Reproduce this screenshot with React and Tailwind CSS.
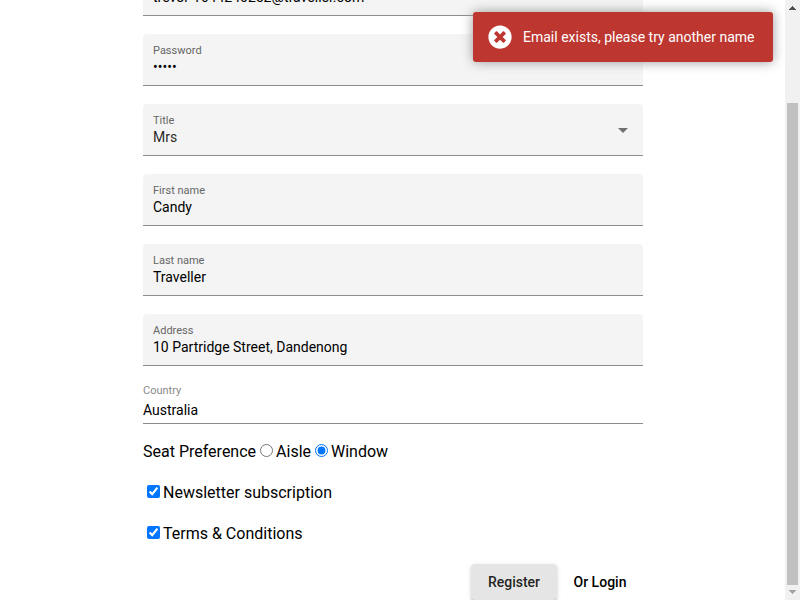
import { FaTimesCircle } from "react-icons/fa";

const textFields = [
  { id: "first-name", label: "First name", value: "Candy" },
  { id: "last-name", label: "Last name", value: "Traveller" },
  { id: "address", label: "Address", value: "10 Partridge Street, Dandenong" },
];

function FilledField({ id, label, children }) {
  return (
    <div className="relative flex h-[52px] flex-col rounded-t border-b border-[#8c8c8c] bg-[#f4f4f4] px-[10px] pt-[11px]">
      <label htmlFor={id} className="text-[11px] leading-3 text-[#666666]">
        {label}
      </label>
      {children}
    </div>
  );
}

function TextField({ id, label, value, type = "text" }) {
  return (
    <FilledField id={id} label={label}>
      <input
        id={id}
        type={type}
        defaultValue={value}
        className="h-5 w-full bg-transparent text-sm text-black outline-none"
      />
    </FilledField>
  );
}

function CheckRow({ id, label }) {
  return (
    <div className="mt-[17px] flex h-6 items-center gap-[3px] pl-1">
      <input id={id} type="checkbox" defaultChecked className="mb-[3px] h-[13px] w-[13px]" />
      <label htmlFor={id}>{label}</label>
    </div>
  );
}

function Toast() {
  return (
    <div
      role="alert"
      className="absolute top-3 right-3 flex h-[50px] w-[300px] items-center gap-[11px] rounded-[3px] bg-[#bd362f] pl-[15px] text-sm text-white shadow-[0_0_12px_#999999]"
    >
      <FaTimesCircle className="h-6 w-6" />
      <span>Email exists, please try another name</span>
    </div>
  );
}

function ScrollTrack() {
  return (
    <div aria-hidden="true" className="flex w-[15px] shrink-0 flex-col items-center bg-[#f1f1f1]">
      <svg viewBox="0 0 15 15" className="h-[15px] w-[15px] shrink-0" shapeRendering="crispEdges">
        <path d="M4 10h7v-1h-1v-1h-1v-1h-1v-1h-1v1h-1v1h-1v1h-1z" fill="#505050" />
      </svg>
      <div className="flex w-full flex-1 flex-col items-center">
        <div className="h-[88px] shrink-0" />
        <div className="w-[11px] flex-1 bg-[#c1c1c1]" />
      </div>
      <svg viewBox="0 0 15 15" className="h-[15px] w-[15px] shrink-0" shapeRendering="crispEdges">
        <path d="M4 5h7v1h-1v1h-1v1h-1v1h-1v-1h-1v-1h-1v-1h-1z" fill="#a3a3a3" />
      </svg>
    </div>
  );
}

export default function App() {
  return (
    <div className="flex h-screen bg-white font-[Roboto,sans-serif] text-black">
      <main className="relative min-w-0 flex-1 overflow-hidden pl-px">
        <form className="mx-auto -mt-9 w-full max-w-[500px]" onSubmit={(e) => e.preventDefault()}>
          <div className="flex flex-col gap-[18px]">
            <TextField id="email" label="Email" value="trevor-1644240252@traveller.com" type="email" />
            <TextField id="password" label="Password" value="12345" type="password" />
            <FilledField id="title" label="Title">
              <select
                id="title"
                defaultValue="Mrs"
                className="h-5 w-full appearance-none bg-transparent text-sm text-black/87 outline-none"
              >
                <option>Mr</option>
                <option>Mrs</option>
                <option>Ms</option>
              </select>
              <svg viewBox="0 0 10 5" className="pointer-events-none absolute top-6 right-[15px] h-[5px] w-[10px]">
                <path d="M0 0h10L5 5z" fill="#707070" />
              </svg>
            </FilledField>
            {textFields.map((field) => (
              <TextField key={field.id} {...field} />
            ))}
          </div>

          <div className="mt-[19px] flex h-[39px] flex-col border-b border-[#8c8c8c]">
            <label htmlFor="country" className="text-[11px] leading-3 text-[#8a8a8a]">
              Country
            </label>
            <input
              id="country"
              type="text"
              defaultValue="Australia"
              className="mt-px h-6 w-full bg-transparent text-sm outline-none"
            />
          </div>

          <div role="radiogroup" aria-labelledby="seat" className="mt-4 flex h-6 items-center">
            <span id="seat">Seat Preference</span>
            <span className="ml-1 flex items-center gap-[3px]">
              <input id="aisle" type="radio" name="seat" className="mb-[3px] h-[13px] w-[13px]" />
              <label htmlFor="aisle">Aisle</label>
            </span>
            <span className="ml-1 flex items-center gap-[3px]">
              <input id="window" type="radio" name="seat" defaultChecked className="mb-[3px] h-[13px] w-[13px]" />
              <label htmlFor="window">Window</label>
            </span>
          </div>
          <CheckRow id="newsletter" label="Newsletter subscription" />
          <CheckRow id="terms" label="Terms & Conditions" />

          <div className="mt-[18px] flex justify-end text-sm font-medium">
            <button
              type="submit"
              className="h-9 w-[86px] rounded bg-[#e5e5e5] text-black/87 shadow-[0_3px_1px_-2px_rgba(0,0,0,0.2),0_2px_2px_0_rgba(0,0,0,0.14),0_1px_5px_0_rgba(0,0,0,0.12)]"
            >
              Register
            </button>
            <a href="#login" className="flex h-9 w-[86px] items-center justify-center">
              Or Login
            </a>
          </div>
        </form>
        <Toast />
      </main>
      <ScrollTrack />
    </div>
  );
}
